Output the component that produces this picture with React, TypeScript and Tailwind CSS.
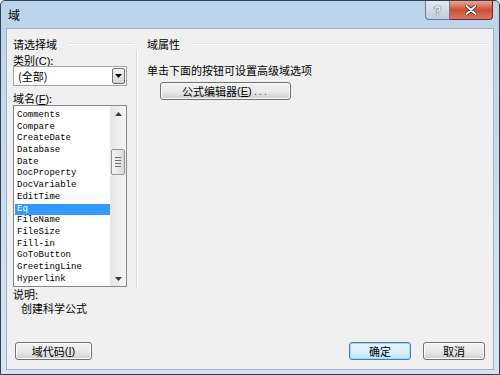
import type { ReactNode } from 'react';

const CJK = "font-['Noto_Sans_CJK_SC','Liberation_Sans',sans-serif]";

const FIELDS = [
  'Comments',
  'Compare',
  'CreateDate',
  'Database',
  'Date',
  'DocProperty',
  'DocVariable',
  'EditTime',
  'Eq',
  'FileName',
  'FileSize',
  'Fill-in',
  'GoToButton',
  'GreetingLine',
  'Hyperlink',
];

function Key({ k }: { k: string }) {
  return (
    <span className="font-['Liberation_Sans',sans-serif]">
      (<span className="underline underline-offset-1">{k}</span>)
    </span>
  );
}

function WinButton({ children, primary, className }: { children: ReactNode; primary?: boolean; className: string }) {
  return (
    <div
      className={`flex h-[18px] items-center justify-center rounded-[3px] border text-[11px] leading-none text-black ${
        primary
          ? 'border-[#3c7fb1] bg-gradient-to-b from-[#eaf6fd] via-[#d9f0fc] to-[#bee6fd] shadow-[inset_0_0_0_1px_#a7d9f5]'
          : 'border-[#707070] bg-gradient-to-b from-[#f2f2f2] via-[#ebebeb] to-[#cfcfcf] shadow-[inset_0_0_0_1px_#fcfcfc]'
      } ${className}`}
    >
      {children}
    </div>
  );
}

function GroupHeader({ label }: { label: string }) {
  return (
    <div className="flex h-[12px] items-center text-[11px] leading-[12px] text-black">
      <span className="whitespace-nowrap">{label}</span>
      <div className="ml-[12px] h-[2px] flex-1 border-t border-b border-t-[#d5dfe5] border-b-white" />
    </div>
  );
}

export default function App() {
  return (
    <div
      className={`flex h-[375px] w-[500px] flex-col overflow-hidden rounded-t-[5px] border border-[#33404e] bg-gradient-to-b from-[#bcd3ec] via-[#cadcf0] to-[#d6e4f3] ${CJK}`}
    >
      {/* title bar */}
      <div className="flex h-[27px] shrink-0 items-start justify-between pl-[7px] pr-[6px]">
        <span className="mt-[7px] text-[12px] leading-[14px] text-black">域</span>
        <div className="flex">
          <div className="flex h-[19px] w-[25px] items-center justify-center rounded-bl-[4px] border border-t-0 border-[#6d7c8d] bg-gradient-to-b from-[#e3ebf4] via-[#cfdbe8] to-[#c0cfdf] font-['Liberation_Sans',sans-serif] text-[13px] font-bold leading-none text-[#f4f7fa] [text-shadow:0_0_1px_#3d4a58,0_0_1px_#3d4a58]">
            ?
          </div>
          <div className="flex h-[19px] w-[43px] items-center justify-center rounded-br-[4px] border border-l-0 border-t-0 border-[#6a2a20] bg-gradient-to-b from-[#e9a595] via-[#cf4b33] to-[#d77863]">
            <svg width="12" height="10" viewBox="0 0 12 10">
              <path d="M1.5 1 L10.5 9 M10.5 1 L1.5 9" stroke="#4a1a12" strokeWidth="3.4" strokeLinecap="round" />
              <path d="M1.5 1 L10.5 9 M10.5 1 L1.5 9" stroke="#ffffff" strokeWidth="2" strokeLinecap="round" />
            </svg>
          </div>
        </div>
      </div>

      {/* client area */}
      <div className="mx-[5px] mb-[4px] flex flex-1 flex-col border border-[#9fb1c6] bg-[#f0f0f0] text-black">
        <div className="flex">
          {/* left column */}
          <div className="flex w-[129px] flex-col pl-[6px] pr-[2px] pt-[9px]">
            <GroupHeader label="请选择域" />
            <div className="mt-[4px] h-[12px] text-[11px] leading-[12px]">
              类别<Key k="C" />:
            </div>
            <div className="flex h-[20px] w-[114px] items-center border border-[#a4a4a4] bg-white pl-[4px] pr-[1px]">
              <span className="flex-1 text-[11px] leading-none">(全部)</span>
              <div className="flex h-[16px] w-[13px] items-center justify-center rounded-[2px] border border-[#707070] bg-gradient-to-b from-[#f4f4f4] to-[#d6d6d6]">
                <svg width="7" height="4" viewBox="0 0 7 4">
                  <path d="M0 0 H7 L3.5 4 Z" fill="#000" />
                </svg>
              </div>
            </div>
            <div className="mt-[6px] h-[13px] text-[11px] leading-[12px]">
              域名<Key k="F" />:
            </div>
            <div className="flex h-[182px] w-[114px] border border-[#828790] bg-white">
              <div className="flex flex-1 flex-col pl-[1px] pt-[4px] font-['Liberation_Mono',monospace] text-[9px] text-black">
                {FIELDS.map((f) => (
                  <div
                    key={f}
                    className={`h-[11.7px] pl-[2px] leading-[11.7px] ${f === 'Eq' ? 'bg-[#3399ff] text-white' : 'text-black'}`}
                  >
                    {f}
                  </div>
                ))}
              </div>
              {/* scrollbar */}
              <div className="flex w-[16px] flex-col items-center bg-gradient-to-r from-[#e6e6e6] to-[#f5f5f5]">
                <div className="flex h-[16px] items-center justify-center">
                  <svg width="7" height="4" viewBox="0 0 7 4">
                    <path d="M0 4 H7 L3.5 0 Z" fill="#3a3a3a" />
                  </svg>
                </div>
                <div className="mt-[27px] flex h-[26px] w-[14px] flex-col items-center justify-center gap-[2px] rounded-[2px] border border-[#959595] bg-gradient-to-r from-[#f3f3f3] via-[#e9e9e9] to-[#d8d8d8]">
                  <div className="h-px w-[6px] bg-[#6f6f6f]" />
                  <div className="h-px w-[6px] bg-[#6f6f6f]" />
                  <div className="h-px w-[6px] bg-[#6f6f6f]" />
                  <div className="h-px w-[6px] bg-[#6f6f6f]" />
                </div>
                <div className="flex-1" />
                <div className="flex h-[14px] items-center justify-center">
                  <svg width="7" height="4" viewBox="0 0 7 4">
                    <path d="M0 0 H7 L3.5 4 Z" fill="#3a3a3a" />
                  </svg>
                </div>
              </div>
            </div>
          </div>

          {/* divider */}
          <div className="mt-[21px] w-[2px] border-l border-r border-l-[#d5dfe5] border-r-white" />

          {/* right column */}
          <div className="flex flex-1 flex-col pl-[9px] pr-[6px] pt-[9px]">
            <GroupHeader label="域属性" />
            <div className="mt-[14px] h-[12px] text-[11px] leading-[12px]">单击下面的按钮可设置高级域选项</div>
            <WinButton className="ml-[13px] mt-[6px] h-[17px] w-[131px]">
              公式编辑器<Key k="E" />
              <span className="ml-[2px] font-['Liberation_Sans',sans-serif] tracking-[2px] text-[#555]">...</span>
            </WinButton>
          </div>
        </div>

        {/* description */}
        <div className="pl-[6px] text-[11px] leading-[14px]">
          <div>说明:</div>
          <div className="pl-[8px]">创建科学公式</div>
        </div>

        {/* buttons */}
        <div className="flex flex-1 items-end pb-[9px] pl-[8px] pr-[8px]">
          <WinButton className="w-[77px]">
            域代码<Key k="I" />
          </WinButton>
          <div className="flex-1" />
          <WinButton primary className="w-[62px]">
            确定
          </WinButton>
          <WinButton className="ml-[12px] w-[62px]">取消</WinButton>
        </div>
      </div>
    </div>
  );
}
